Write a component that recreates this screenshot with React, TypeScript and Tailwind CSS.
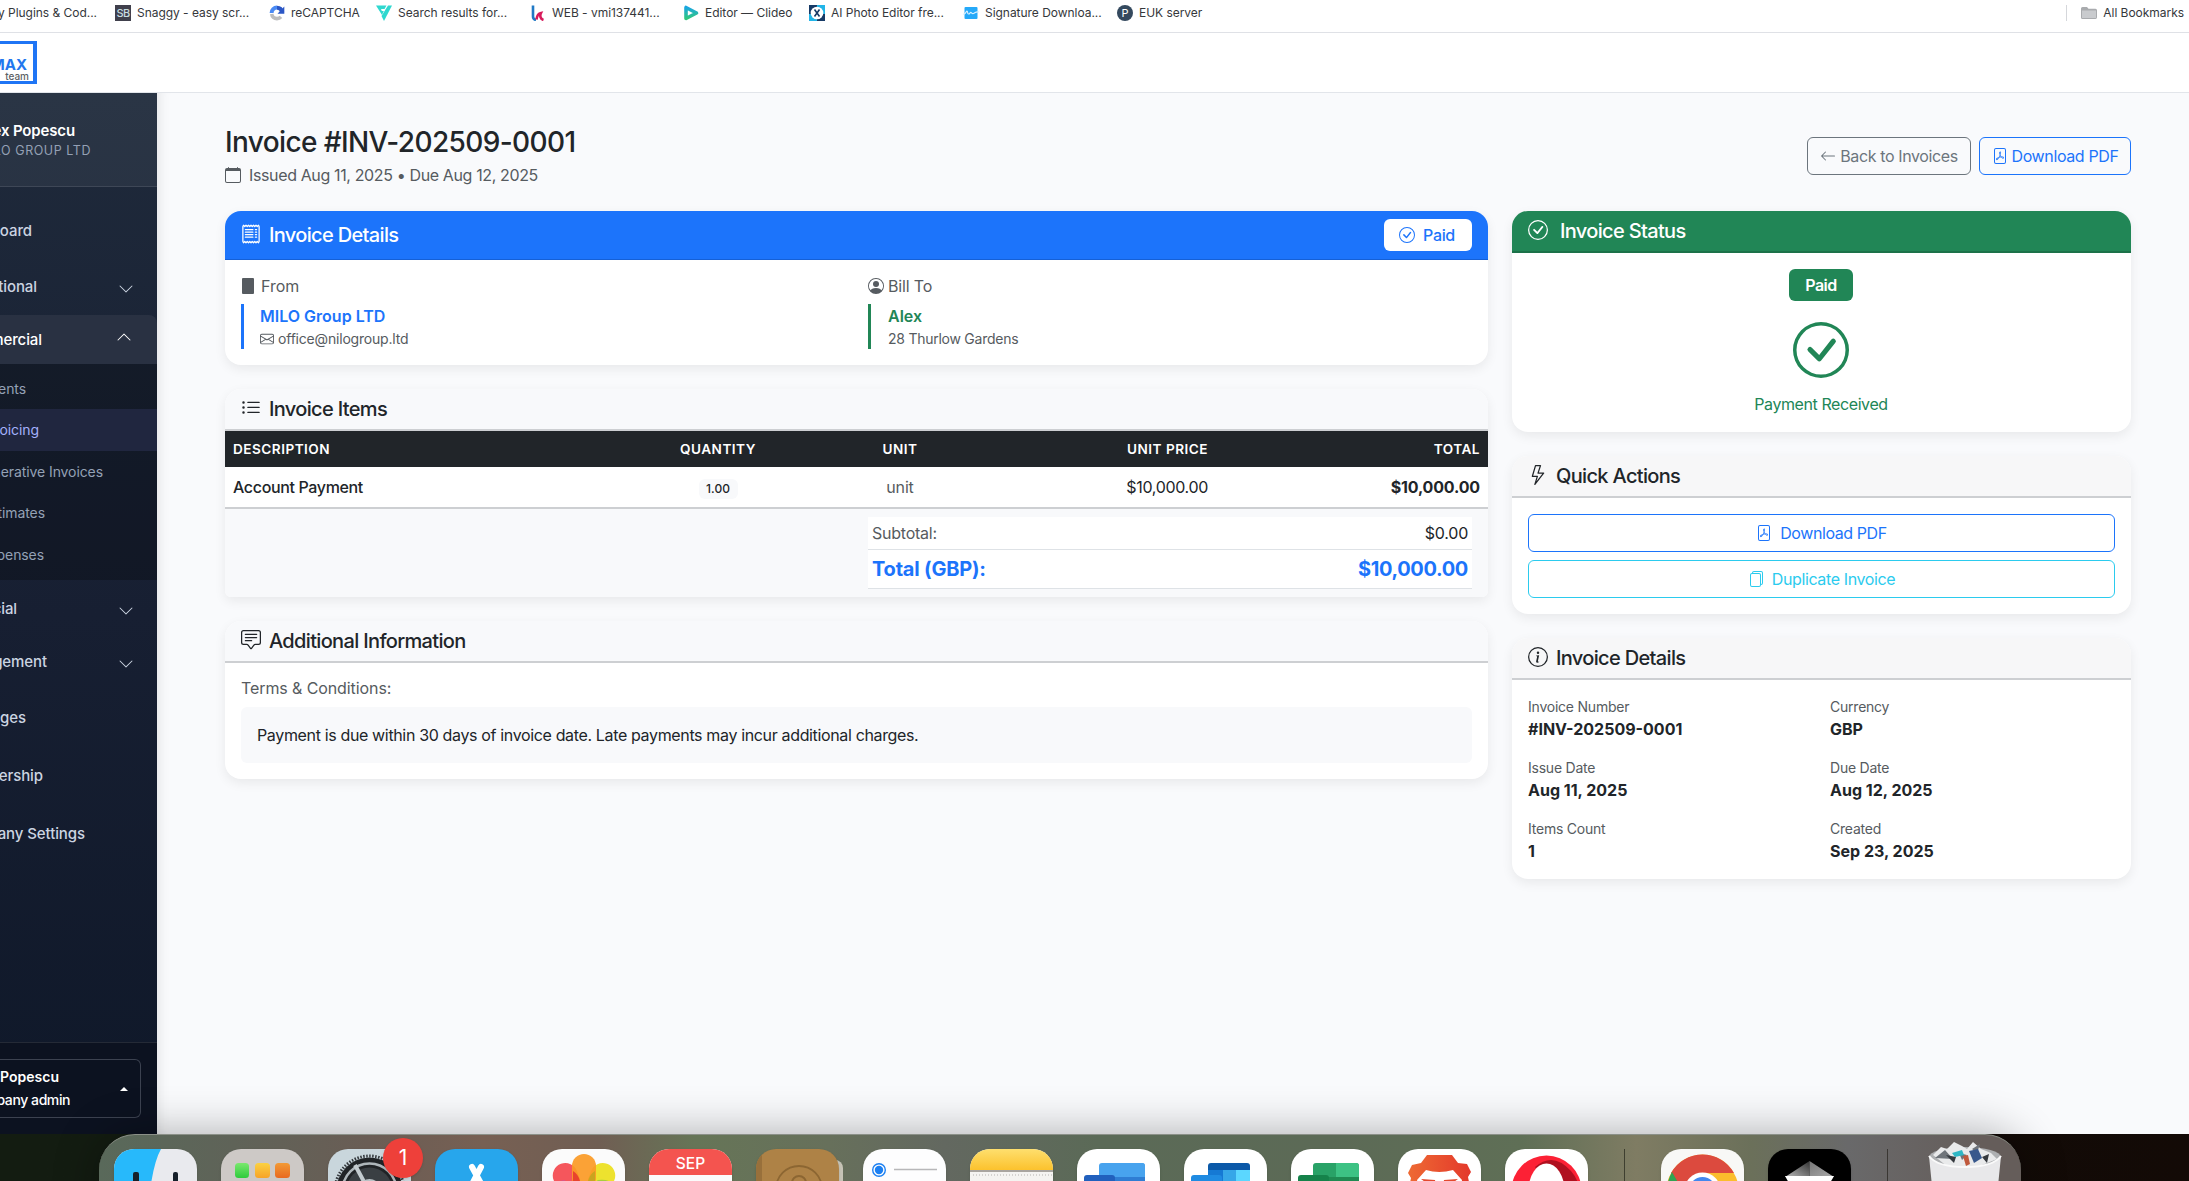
import type { ReactNode } from "react";
import {
  BsArrowLeft,
  BsCalendar,
  BsChatSquareText,
  BsCheckCircle,
  BsChevronDown,
  BsChevronUp,
  BsEnvelope,
  BsFilePdf,
  BsFiles,
  BsInfoCircle,
  BsLightning,
  BsListUl,
  BsPersonCircle,
  BsReceipt,
} from "react-icons/bs";

/* ---------- Bookmarks bar ---------- */

const bookmarks: { label: string; width: string; icon: ReactNode }[] = [
  {
    label: "Snaggy - easy scr...",
    width: "w-[154px]",
    icon: (
      <div className="flex h-4 w-4 items-center justify-center bg-[#40404c] text-[11px] font-medium tracking-tighter text-[#c8dce0]">
        SB
      </div>
    ),
  },
  {
    label: "reCAPTCHA",
    width: "w-[107px]",
    icon: (
      <svg viewBox="0 0 16 16" className="h-4 w-4" fill="none">
        <path d="M2.6 8A5.4 5.4 0 0 1 8 2.6" stroke="#4a8af4" strokeWidth="4" />
        <path d="M8 2.8c2.600 0 4.600 1.600 5.200 4.600" stroke="#2b57c5" strokeWidth="4" />
        <path d="M15.300 1.500v7.200H8.500z" fill="#2b57c5" />
        <path d="M2.700 9c.3 2.600 2.500 4.600 5.300 4.600 1.700 0 3-.6 4-1.700" stroke="#bcbdbf" strokeWidth="3.600" />
      </svg>
    ),
  },
  {
    label: "Search results for...",
    width: "w-[154px]",
    icon: (
      <svg viewBox="0 0 16 16" className="h-4 w-4">
        <path d="M0 .5h10.500L8.500 4H5l.8 2h2L6 10z" fill="#2fd8cf" />
        <path d="M12 .5h4L8 16 5.500 11z" fill="#2fd8cf" />
      </svg>
    ),
  },
  {
    label: "WEB - vmi137441...",
    width: "w-[153px]",
    icon: (
      <svg viewBox="0 0 16 16" className="h-4 w-4" fill="none">
        <path d="M3 .5v11q0 3 3 3.500" stroke="#2079c5" strokeWidth="2.600" />
        <path d="M6.500 14.500C7 10.500 8 8.500 11 8c-1.500 3-.5 6 2.500 7" stroke="#d81b5c" strokeWidth="2.600" />
      </svg>
    ),
  },
  {
    label: "Editor — Clideo",
    width: "w-[126px]",
    icon: (
      <svg viewBox="0 0 16 16" className="h-4 w-4">
        <defs>
          <linearGradient id="clideo" x1="0" y1="0" x2="0" y2="1">
            <stop offset="0" stopColor="#1aa6e0" />
            <stop offset="1" stopColor="#30c77e" />
          </linearGradient>
        </defs>
        <path d="M3 2.500v11l10.500-5.500z" fill="none" stroke="url(#clideo)" strokeWidth="3.600" strokeLinejoin="round" />
      </svg>
    ),
  },
  {
    label: "AI Photo Editor fre...",
    width: "w-[154px]",
    icon: (
      <svg viewBox="0 0 16 16" className="h-4 w-4">
        <path d="M0 0h8v16H0z" fill="#173a66" />
        <path d="M8 0h8v9H8zM0 9h8v7H0z" fill="#22b5e8" />
        <path d="M8 9h8v7H8z" fill="#173a66" />
        <circle cx="8" cy="8" r="6.300" fill="#fff" />
        <path d="M5.500 4.500l5 7M10.500 4.500l-5 7" stroke="#173a66" strokeWidth="1.600" />
      </svg>
    ),
  },
  {
    label: "Signature Downloa...",
    width: "w-[154px]",
    icon: (
      <svg viewBox="0 0 16 16" className="h-4 w-4">
        <rect x="1.500" y="2" width="13" height="12" rx="1" fill="#25a9f9" />
        <path d="M0 9c3 1 3-3 4-3s0 3 1.500 3S7 7 8 7.500s1 1.500 2.500 1S13 6 16 7" fill="none" stroke="#d8f0ff" strokeWidth="1.200" />
      </svg>
    ),
  },
  {
    label: "EUK server",
    width: "w-[120px]",
    icon: (
      <div className="flex h-4 w-4 items-center justify-center rounded-full bg-[#34495e] text-[11px] text-white">P</div>
    ),
  },
];

function BookmarksBar() {
  return (
    <div className="flex h-[33px] shrink-0 items-start border-b border-[#dfe1e6] bg-white pt-[3px] text-[12px] leading-5 tracking-[-0.003em] text-[#35373b]">
      <div className="flex w-[115px] shrink-0">
        <div className="flex w-[97px] justify-end overflow-hidden whitespace-nowrap">y Plugins &amp; Cod...</div>
      </div>
      {bookmarks.map((b) => (
        <div key={b.label} className={`flex shrink-0 items-center gap-1.5 whitespace-nowrap ${b.width}`}>
          {b.icon}
          <span>{b.label}</span>
        </div>
      ))}
      <div className="mr-[5px] ml-auto flex items-center gap-1.5">
        <div className="mr-[8px] h-4 w-px bg-[#d5d7db]" />
        <svg viewBox="0 0 16 16" className="h-4 w-4">
          <path d="M0 3.500Q0 2 1.500 2H6l1.500 1.800H14.500Q16 3.800 16 5.300v7Q16 14 14.500 14h-13Q0 14 0 12.500z" fill="#a9abae" />
          <path d="M1 5.500h14v7.500H1z" fill="#c9cbce" />
        </svg>
        <span>All Bookmarks</span>
      </div>
    </div>
  );
}

function Navbar() {
  return (
    <div className="flex h-[60px] shrink-0 items-start border-b border-[#e2e5ea] bg-white pt-2">
      <div className="flex h-[43px] w-[37px] flex-col items-end overflow-hidden border-y-[3px] border-r-[4px] border-[#1f75f5] pt-[12px] pr-[4px]">
        <span className="flex h-[16px] w-8 justify-end pr-[2px] text-[15px] leading-[18px] font-bold text-[#2377ee]">MAX</span>
        <span className="text-[10px] leading-[8px] font-medium text-[#5c6066]">team</span>
      </div>
    </div>
  );
}

/* ---------- Sidebar ---------- */

type Row = { label: string; h: string; w: string; chevron?: boolean };

const topRows: Row[] = [
  { label: "Dashboard", h: "h-14", w: "w-[32px]" },
  { label: "Operational", h: "h-[57px]", w: "w-[37px]", chevron: true },
];

const bottomRows: Row[] = [
  { label: "Financial", h: "h-[57px]", w: "w-[17px]", chevron: true },
  { label: "Management", h: "h-12", w: "w-[47px]", chevron: true },
  { label: "Messages", h: "h-16", w: "w-[26px]" },
  { label: "Partnership", h: "h-[53px]", w: "w-[43px]" },
  { label: "Company Settings", h: "h-[63px]", w: "w-[85px]" },
];

const subRows = [
  { label: "Clients", h: "h-[41px]", w: "w-[26px]", active: false },
  { label: "Invoicing", h: "h-[42px]", w: "w-[39px]", active: true },
  { label: "Generative Invoices", h: "h-[41px]", w: "w-[103px]", active: false },
  { label: "Estimates", h: "h-[41px]", w: "w-[45px]", active: false },
  { label: "Expenses", h: "h-[42px]", w: "w-[44px]", active: false },
];

function NavRow({ row }: { row: Row }) {
  return (
    <div className={`flex items-center justify-between pr-[23px] pt-0.5 ${row.h}`}>
      <span className={`flex justify-end whitespace-nowrap ${row.w}`}>{row.label}</span>
      {row.chevron && <BsChevronDown className="mt-[3px] h-4 w-4" />}
    </div>
  );
}

function Sidebar() {
  return (
    <aside className="z-10 flex w-[157px] shrink-0 flex-col overflow-hidden bg-linear-to-b from-[#1f2a3b] via-[#171f32] to-[#0f1829]">
      <div className="h-[94px] border-b border-white/10 bg-white/5 pt-7">
        <div className="flex h-5 w-[75px] items-center justify-end text-[15px] font-semibold tracking-[-0.01em] whitespace-nowrap text-white">
          Alex Popescu
        </div>
        <div className="flex h-[20px] w-[91px] items-center justify-end text-[12.500px] tracking-[0.045em] whitespace-nowrap text-[#94a0b4]">
          MILO GROUP LTD
        </div>
      </div>
      <nav className="pt-[15px] text-[15px] font-medium tracking-[-0.006em] text-[#cbd4e1]">
        {topRows.map((r) => (
          <NavRow key={r.label} row={r} />
        ))}
        <div className="flex h-[49px] items-center justify-between rounded-tr-lg bg-[#293142] pt-0.5 pr-[25px] text-white">
          <span className="flex w-[42px] justify-end">Commercial</span>
          <BsChevronUp className="mb-[7px] h-4 w-4" />
        </div>
        <div className="bg-black/25 pt-1 pb-[5px] text-[14px] font-normal text-[#94a1b5]">
          {subRows.map((r) => (
            <div
              key={r.label}
              className={`flex items-center ${r.h} ${r.active ? "bg-[#20263f] pb-0.5 text-[#a4b1fb]" : ""}`}
            >
              <span className={`flex justify-end whitespace-nowrap ${r.w}`}>{r.label}</span>
            </div>
          ))}
        </div>
        {bottomRows.map((r) => (
          <NavRow key={r.label} row={r} />
        ))}
      </nav>
      <div className="mt-auto h-[92px] border-t border-white/10 bg-[#0c1220] pt-4">
        <div className="flex h-[59px] w-[141px] items-center justify-between rounded-r-md border-y border-r border-[#3c4250] pr-3 text-[14px] text-white">
          <div className="pb-0.5">
            <div className="flex h-[23px] w-[59px] items-center justify-end font-semibold whitespace-nowrap">Popescu</div>
            <div className="flex h-[23px] w-[70px] items-center justify-end font-medium tracking-[-0.03em] whitespace-nowrap">
              Company admin
            </div>
          </div>
          <svg viewBox="0 0 8 4" className="mt-px h-1 w-2">
            <path d="M0 4L4 0l4 4z" fill="#fff" />
          </svg>
        </div>
      </div>
    </aside>
  );
}

/* ---------- Cards ---------- */

function Card({ children, className = "rounded-[16px]" }: { children: ReactNode; className?: string }) {
  return (
    <section className={`overflow-hidden bg-white shadow-[0_4px_12px_rgba(0,0,0,0.07)] ${className}`}>{children}</section>
  );
}

function CardHeader({ icon, title, className }: { icon: ReactNode; title: string; className: string }) {
  return (
    <header
      className={`flex h-[42px] items-center border-b-2 px-4 text-[20px] font-medium tracking-[-0.033em] ${className}`}
    >
      {icon}
      <span className="leading-6">{title}</span>
    </header>
  );
}

const headerIcon = "mr-2 mb-[3px] h-5 w-5";

function DetailsCard() {
  return (
    <Card>
      <header className="flex h-[49px] items-center justify-between border-b border-[#1560d6] bg-[#1c74fb] px-4 text-white">
        <div className="flex items-center text-[20px] font-medium tracking-[-0.033em]">
          <BsReceipt className="mr-2 mb-[3px] h-5 w-5" />
          <span className="leading-6">Invoice Details</span>
        </div>
        <div className="flex h-8 w-[88px] items-center rounded-md bg-white pl-[15px] text-[16px] font-medium tracking-[-0.02em] text-[#1c74fb]">
          <BsCheckCircle className="mr-2 h-4 w-4" />
          Paid
        </div>
      </header>
      <div className="grid grid-cols-[627px_1fr] p-4 text-[#565b60]">
        <div>
          <div className="mb-2 flex h-5 items-center gap-1 text-[16px]">
            <div className="mr-[3px] ml-px h-4 w-3 rounded-[1px] bg-[#565b60]" />
            From
          </div>
          <div className="border-l-[3px] border-[#1c74fb] pl-4">
            <div className="text-[16px] leading-6 font-semibold text-[#1c74fb]">MILO Group LTD</div>
            <div className="flex items-center gap-1 text-[14px] leading-[21px] tracking-[-0.014em]">
              <BsEnvelope className="h-3.5 w-3.5" />
              office@nilogroup.ltd
            </div>
          </div>
        </div>
        <div>
          <div className="mb-2 flex h-5 items-center gap-1 text-[16px] tracking-[-0.01em]">
            <BsPersonCircle className="h-4 w-4" />
            Bill To
          </div>
          <div className="border-l-[3px] border-[#218656] pl-[17px]">
            <div className="text-[16px] leading-6 font-semibold text-[#218656]">Alex</div>
            <div className="text-[14px] leading-[21px] tracking-[-0.018em]">28 Thurlow Gardens</div>
          </div>
        </div>
      </div>
    </Card>
  );
}

const tableCols = "grid grid-cols-[402px_182px_182px_225px_272px] items-center";

function ItemsCard() {
  return (
    <Card className="rounded-t-[16px] rounded-b-md">
      <CardHeader
        icon={<BsListUl className={headerIcon} />}
        title="Invoice Items"
        className="border-[#cdcfd2] bg-[#f8f9fb] text-[#212529]"
      />
      <div
        className={`${tableCols} h-9 bg-[#212529] text-[13.600px] font-semibold tracking-[0.035em] text-white uppercase`}
      >
        <div className="px-2">Description</div>
        <div className="text-center">Quantity</div>
        <div className="text-center">Unit</div>
        <div className="px-2 text-right">Unit Price</div>
        <div className="px-2 text-right">Total</div>
      </div>
      <div className={`${tableCols} h-[42px] border-b-2 border-[#cdcfd2] text-[16px] text-[#212529]`}>
        <div className="px-2 font-medium tracking-[-0.022em]">Account Payment</div>
        <div className="flex justify-center pt-1">
          <span className="flex h-5 w-[39px] items-center justify-center rounded-md bg-[#f8f9fb] text-[12px] font-medium">
            1.00
          </span>
        </div>
        <div className="text-center tracking-[-0.01em] text-[#565b60]">unit</div>
        <div className="px-2 text-right tracking-[-0.02em]">$10,000.00</div>
        <div className="px-2 text-right font-bold tracking-[-0.01em]">$10,000.00</div>
      </div>
      <div className="bg-[#f8f9fb] py-2 pr-4">
        <div className="ml-auto w-[604px] bg-white text-[#212529]">
          <div className="flex h-[33px] items-center justify-between border-b border-[#dee2e6] px-1 text-[16px] tracking-[-0.015em]">
            <span className="text-[#565b60]">Subtotal:</span>
            <span>$0.00</span>
          </div>
          <div className="flex h-[39px] items-center justify-between border-b border-[#dee2e6] px-1 text-[20px] font-bold text-[#1c74fb]">
            <span className="tracking-[-0.01em]">Total (GBP):</span>
            <span className="tracking-[-0.018em]">$10,000.00</span>
          </div>
        </div>
      </div>
    </Card>
  );
}

function AdditionalCard() {
  return (
    <Card>
      <CardHeader
        icon={<BsChatSquareText className={headerIcon} />}
        title="Additional Information"
        className="border-[#cdcfd2] bg-[#f8f9fb] text-[#212529]"
      />
      <div className="p-4 text-[16px]">
        <div className="mb-[9px] leading-[19px] tracking-[-0.006em] text-[#565b60]">Terms &amp; Conditions:</div>
        <div className="rounded-md bg-[#f8f9fb] p-4 leading-6 tracking-[-0.022em] text-[#212529]">
          Payment is due within 30 days of invoice date. Late payments may incur additional charges.
        </div>
      </div>
    </Card>
  );
}

function StatusCard() {
  return (
    <Card>
      <CardHeader
        icon={<BsCheckCircle className="mr-3 mb-[3px] h-5 w-5" />}
        title="Invoice Status"
        className="border-[#1c7249] bg-[#218656] text-white"
      />
      <div className="flex flex-col items-center p-4 pr-[17px] text-[#218656]">
        <div className="flex h-8 w-16 items-center justify-center rounded-md bg-[#218656] text-[16px] font-semibold tracking-[-0.03em] text-white">
          Paid
        </div>
        <BsCheckCircle className="mt-[21px] mb-[14px] h-14 w-14" />
        <div className="text-[16px] leading-6 tracking-[-0.026em]">Payment Received</div>
      </div>
    </Card>
  );
}

function ActionsCard() {
  const button = "flex h-[38px] items-center justify-center gap-2 rounded-md border text-[16px]";
  return (
    <Card>
      <CardHeader
        icon={<BsLightning className={headerIcon} />}
        title="Quick Actions"
        className="border-[#cdcfd2] bg-[#f7f7f8] text-[#212529]"
      />
      <div className="flex flex-col gap-2 p-4">
        <div className={`${button} border-[#1c74fb] tracking-[-0.026em] text-[#1c74fb]`}>
          <BsFilePdf className="h-4 w-4" />
          Download PDF
        </div>
        <div className={`${button} border-[#2bcbee] tracking-[-0.024em] text-[#2bcbee]`}>
          <BsFiles className="h-4 w-4" />
          Duplicate Invoice
        </div>
      </div>
    </Card>
  );
}

const facts: [string, string][] = [
  ["Invoice Number", "#INV-202509-0001"],
  ["Currency", "GBP"],
  ["Issue Date", "Aug 11, 2025"],
  ["Due Date", "Aug 12, 2025"],
  ["Items Count", "1"],
  ["Created", "Sep 23, 2025"],
];

function FactsCard() {
  return (
    <Card>
      <CardHeader
        icon={<BsInfoCircle className={headerIcon} />}
        title="Invoice Details"
        className="border-[#cdcfd2] bg-[#f7f7f8] text-[#212529]"
      />
      <div className="grid grid-cols-[302px_1fr] gap-y-4 p-4">
        {facts.map(([label, value]) => (
          <div key={label}>
            <div className="text-[14px] leading-[21px] tracking-[-0.016em] text-[#565b60]">{label}</div>
            <div className="text-[16px] leading-6 font-bold text-[#212529]">{value}</div>
          </div>
        ))}
      </div>
    </Card>
  );
}

/* ---------- Dock ---------- */

function DockIcon({ bg, gap = "ml-[24px]", children }: { bg: string; gap?: string; children: ReactNode }) {
  return (
    <div className={`h-[83px] w-[83px] shrink-0 overflow-hidden rounded-[20px] shadow-sm ${gap} ${bg}`}>
      <svg viewBox="0 0 83 83" className="h-full w-full">
        {children}
      </svg>
    </div>
  );
}

function Office({ back, right, low, front }: { back: string; right: string; low: string; front: string }) {
  return (
    <>
      <rect x="22" y="14" width="46" height="55" rx="3" fill={back} />
      <path d="M45 14h20q3 0 3 3v11H45z" fill={right} />
      <path d="M22 28h46v14H22z" fill={low} />
      <rect x="7" y="26" width="31" height="31" rx="3" fill={front} />
    </>
  );
}

function Dock() {
  return (
    <div className="z-20 flex h-[47px] shrink-0 bg-linear-to-r from-[#131c11] from-5% via-[#0d0d0a] to-[#130a06] pl-[99px]">
      <div className="flex h-[100px] w-[1922px] shrink-0 items-start rounded-t-[36px] border-t border-[#8b9088] [background-image:linear-gradient(90deg,#59695a_0%,#5f6358_7%,#6a5d55_14%,#776053_20%,#705e53_26%,#667557_31%,#67705b_38%,#636860_44%,#5b6a57_52%,#5c6a56_64%,#5f6f56_74%,#7f7c63_80%,#6b705a_86%,#69696a_91%,#655d5a_98%)] pt-[14px] pl-[15px] shadow-[0_0_46px_rgba(0,0,0,0.32)]">
        <DockIcon gap="" bg="bg-[#e9eaee]">
          <path d="M0 0h47Q39 14 35 50H0z" fill="#27b9fb" />
          <rect x="19" y="23" width="6" height="16" rx="2" fill="#16202a" />
          <rect x="59" y="23" width="5" height="16" rx="2" fill="#16202a" />
        </DockIcon>
        <DockIcon bg="bg-[#cdc9c6]">
          <defs>
            <linearGradient id="lpGreen" x1="0" y1="0" x2="0" y2="1">
              <stop offset="0" stopColor="#7ae86e" />
              <stop offset="1" stopColor="#2ecb3c" />
            </linearGradient>
            <linearGradient id="lpYellow" x1="0" y1="0" x2="0" y2="1">
              <stop offset="0" stopColor="#fbd141" />
              <stop offset="1" stopColor="#f7a327" />
            </linearGradient>
            <linearGradient id="lpOrange" x1="0" y1="0" x2="0" y2="1">
              <stop offset="0" stopColor="#f29a36" />
              <stop offset="1" stopColor="#e8691f" />
            </linearGradient>
          </defs>
          <rect x="14" y="14" width="14" height="15" rx="3.500" fill="url(#lpGreen)" />
          <rect x="34" y="14" width="15" height="15" rx="3.500" fill="url(#lpYellow)" />
          <rect x="54" y="14" width="15" height="15" rx="3.500" fill="url(#lpOrange)" />
        </DockIcon>
        <div className="relative ml-6">
          <DockIcon gap="" bg="bg-[#c9d6dc]">
            <circle cx="41.500" cy="41.500" r="33" fill="#202326" />
            <circle cx="41.500" cy="41.500" r="34.500" fill="none" stroke="#33373b" strokeWidth="3" strokeDasharray="1.500 1.500" />
            <circle cx="41.500" cy="41.500" r="27" fill="none" stroke="#aeb6ba" strokeWidth="2.500" />
            <circle cx="41.500" cy="41.500" r="23" fill="#3a3f43" />
            <path d="M41 42L27 16M41 42l28-4" stroke="#c3cbcf" strokeWidth="4" />
            <circle cx="41.500" cy="41.500" r="10" fill="#202326" stroke="#b9c1c5" strokeWidth="3" />
          </DockIcon>
          <div className="absolute -top-[11px] left-[55px] flex h-10 w-10 items-center justify-center rounded-full bg-[#ee403a] text-[21px] text-white shadow">
            1
          </div>
        </div>
        <DockIcon bg="bg-[#27a6ec]">
          <path d="M37 18L60 60M46 18L24 60" stroke="#fff" strokeWidth="6" strokeLinecap="round" />
        </DockIcon>
        <DockIcon bg="bg-[#fbfbfb]">
          <rect x="12" y="14" width="25" height="32" rx="12.500" fill="#f5565c" transform="rotate(-20 24 30)" />
          <rect x="47" y="14" width="25" height="32" rx="12.500" fill="#ede22e" transform="rotate(20 60 30)" />
          <path d="M8 42Q10 33 22 31l20 12z" fill="#d9568d" />
          <path d="M42 42L56 31q16-2 18 12z" fill="#a8cf3c" />
          <rect x="30" y="5" width="24" height="36" rx="12" fill="#fb9a25" opacity=".92" />
          <path d="M31 22q7 4 8 16l-8-6z" fill="#e8432d" />
          <path d="M53 22q-7 4-8 16l8-6z" fill="#c9a51f" />
        </DockIcon>
        <DockIcon bg="bg-[#fbfbfb]">
          <path d="M0 0h83v26H0z" fill="#f4544f" />
          <text x="41.500" y="19.500" textAnchor="middle" fontSize="15.500" fontWeight="500" fill="#fff">
            SEP
          </text>
        </DockIcon>
        <div className="relative ml-6">
          <div className="absolute top-[11px] left-[60px] h-[50px] w-[27px] rounded-r-lg bg-[#c6c3b6]" />
          <DockIcon gap="relative" bg="bg-[#ae8246]">
            <path d="M0 0h6v83H0z" fill="#98703b" />
            <circle cx="43" cy="40" r="23" fill="none" stroke="#8c6632" strokeWidth="1.800" />
            <circle cx="43" cy="34" r="7" fill="none" stroke="#8c6632" strokeWidth="2" />
          </DockIcon>
        </div>
        <DockIcon bg="bg-[#fdfdfe]">
          <circle cx="16" cy="21" r="6.300" fill="none" stroke="#1c80f2" strokeWidth="1.400" />
          <circle cx="16" cy="21" r="4.200" fill="#1c80f2" />
          <path d="M31 20.500h43" stroke="#b7b7b9" strokeWidth="1.400" />
        </DockIcon>
        <DockIcon bg="bg-[#f5f4f1]">
          <defs>
            <linearGradient id="notes" x1="0" y1="0" x2="0" y2="1">
              <stop offset="0" stopColor="#fedf6e" />
              <stop offset="1" stopColor="#fcc22d" />
            </linearGradient>
          </defs>
          <path d="M0 0h83v21H0z" fill="url(#notes)" />
          <path d="M0 21h83v2H0z" fill="#a9a59f" />
          <path d="M3 26h80" stroke="#b5b3b0" strokeDasharray="1 2" />
        </DockIcon>
        <DockIcon bg="bg-white">
          <Office back="#48a3ee" right="#48a3ee" low="#2f7dd3" front="#2160bd" />
        </DockIcon>
        <DockIcon bg="bg-white">
          <path d="M24 17q0-3 3-3h36q3 0 3 3v4H24z" fill="#0b59a8" />
          <path d="M24 21h15v30H24z" fill="#1579d4" />
          <path d="M39 21h13v30H39z" fill="#36a7e8" />
          <path d="M52 21h14v30H52z" fill="#5bd7ff" />
          <rect x="7" y="26" width="31" height="31" rx="3" fill="#1f8be2" />
        </DockIcon>
        <DockIcon bg="bg-white">
          <Office back="#29a267" right="#3dc284" low="#1f8a52" front="#15824a" />
        </DockIcon>
        <DockIcon bg="bg-white">
          <defs>
            <linearGradient id="brave" x1="0" y1="0" x2="1" y2="0">
              <stop offset="0" stopColor="#ee6a33" />
              <stop offset="1" stopColor="#e3382b" />
            </linearGradient>
          </defs>
          <path
            d="M29 6h25l6 8 9 1 4 8-3 5 2 10-12 40H23L11 39l2-10-3-5 4-8 9-2z"
            fill="url(#brave)"
          />
          <path d="M28 21q13 4 27 0l9 10-2 16-20 20-20-20-3-16z" fill="#fff" />
          <path d="M23 30l14 1 1 5-8-1zM60 30l-14 1-1 5 8-1z" fill="#e4492e" />
        </DockIcon>
        <DockIcon bg="bg-white">
          <circle cx="41.500" cy="41.500" r="35" fill="#fc2135" />
          <path d="M30 18Q48 2 66 22q8 9 10 25H50z" fill="#b0101f" />
          <ellipse cx="41.500" cy="41.500" rx="18" ry="27" fill="#fff" />
        </DockIcon>
        <div className="ml-[36px] h-20 w-px bg-[#3e3f30]" />
        <DockIcon gap="ml-[36px]" bg="bg-[#f8f8f6]">
          <circle cx="41.500" cy="41.500" r="36" fill="#fbbd2c" />
          <path d="M10 24A36 36 0 0 1 73 24H41.500L26 50z" fill="#dc4a3e" />
          <path d="M11 23L30 56 40 77A36 36 0 0 1 11 23z" fill="#2fa352" />
          <circle cx="41.500" cy="41.500" r="18" fill="#fff" />
          <circle cx="41.500" cy="41.500" r="13.500" fill="#4387ee" />
        </DockIcon>
        <DockIcon bg="bg-black">
          <defs>
            <linearGradient id="cubeL" x1="1" y1="0" x2="0" y2="1">
              <stop offset="0" stopColor="#333" />
              <stop offset="1" stopColor="#bbb" />
            </linearGradient>
            <linearGradient id="cubeR" x1="0" y1="0" x2="1" y2="1">
              <stop offset="0" stopColor="#777" />
              <stop offset="1" stopColor="#aaa" />
            </linearGradient>
          </defs>
          <path d="M41.500 12v16H17z" fill="url(#cubeL)" />
          <path d="M41.500 12v16H66z" fill="url(#cubeR)" />
          <path d="M17 27h49L41.500 70z" fill="#fff" />
        </DockIcon>
        <div className="ml-[36px] h-20 w-px bg-[#3a3733]" />
        <svg viewBox="0 0 74 60" className="-mt-[8px] ml-[40px] h-[60px] w-[74px] shrink-0">
          <ellipse cx="37" cy="16" rx="36" ry="10" fill="#aeb0b2" />
          <path d="M5 14l8-8 6 2 7-7 8 4 5 3 6-7 8 7 10 4 6 6-20 8H20z" fill="#e9eaeb" />
          <path d="M7 17l10-8 8 9zM44 8l8-5-3 9zM31 12l8 2-5 5z" fill="#6f747a" />
          <path d="M24 12l10-3 2 5-9 2z" fill="#2fb7c5" />
          <path d="M41 10l9-2 4 9-8 5z" fill="#38588c" />
          <path d="M35 15l3 10 4-2-2-9z" fill="#c0593c" />
          <path d="M18 14l8 8 2-6zM54 16l7-3-2 9z" fill="#35393e" />
          <path d="M1 15q8 11 36 11t36-11l-5 50H6z" fill="#e8e8ea" />
          <path d="M1 15q8 11 36 11t36-11" fill="none" stroke="#fafafa" strokeWidth="2" />
        </svg>
      </div>
    </div>
  );
}

export default function App() {
  return (
    <div className="flex h-[1181px] w-[2189px] flex-col overflow-hidden bg-[#f9fafc] font-['Inter',sans-serif]">
      <BookmarksBar />
      <Navbar />
      <div className="flex h-[1041px] shrink-0">
        <Sidebar />
        <main className="flex-1 pt-8 pr-[58px] pl-[68px] shadow-[inset_12px_0_12px_-10px_rgba(0,0,0,0.09)]">
          <div className="mb-6 flex h-[62px] items-center justify-between">
            <div>
              <h1 className="pt-px text-[28px] leading-[33px] font-medium tracking-[-0.022em] text-[#212529]">
                Invoice #INV-202509-0001
              </h1>
              <div className="mt-1 flex h-6 items-center gap-2 text-[16px] tracking-[-0.023em] text-[#565b60]">
                <BsCalendar className="h-4 w-4" />
                Issued Aug 11, 2025 • Due Aug 12, 2025
              </div>
            </div>
            <div className="flex gap-2 text-[16px] tracking-[-0.024em]">
              <div className="flex h-[38px] w-[164px] items-center justify-center gap-1 rounded-md border border-[#6c757d] text-[#6c757d]">
                <BsArrowLeft className="h-4 w-4" />
                Back to Invoices
              </div>
              <div className="flex h-[38px] w-[152px] items-center justify-center gap-1 rounded-md border border-[#1c74fb] text-[#1c74fb]">
                <BsFilePdf className="h-4 w-4" />
                Download PDF
              </div>
            </div>
          </div>
          <div className="flex items-start gap-6">
            <div className="flex w-[1263px] flex-col gap-6">
              <DetailsCard />
              <ItemsCard />
              <AdditionalCard />
            </div>
            <div className="flex flex-1 flex-col gap-6">
              <StatusCard />
              <ActionsCard />
              <FactsCard />
            </div>
          </div>
        </main>
      </div>
      <Dock />
    </div>
  );
}
